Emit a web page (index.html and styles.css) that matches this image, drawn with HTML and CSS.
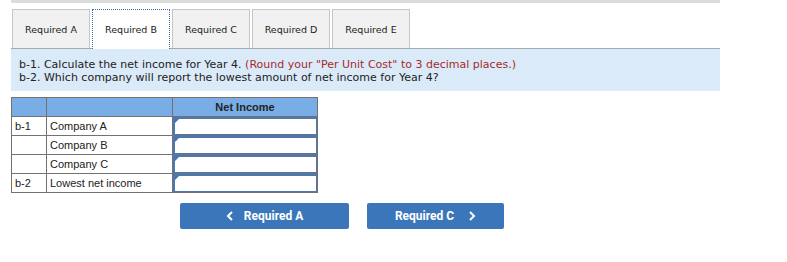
FILE: index.html
```html
<!DOCTYPE html>
<html>
<head>
<meta charset="utf-8">
<link rel="stylesheet" href="styles.css">
</head>
<body>
<div class="wrap">
  <div class="topbar"></div>
  <div class="tabs">
    <div class="tab">Required A</div>
    <div class="tab active">Required B</div>
    <div class="tab">Required C</div>
    <div class="tab">Required D</div>
    <div class="tab">Required E</div>
  </div>
  <div class="question">
    <div>b-1. Calculate the net income for Year 4. <span class="hint">(Round your "Per Unit Cost" to 3 decimal places.)</span></div>
    <div>b-2. Which company will report the lowest amount of net income for Year 4?</div>
  </div>
  <table class="grid">
    <colgroup><col class="c1"><col class="c2"><col class="c3"></colgroup>
    <thead>
      <tr><th></th><th></th><th>Net Income</th></tr>
    </thead>
    <tbody>
      <tr><td>b-1</td><td>Company A</td><td class="inp"><div class="box"><span class="tri"></span></div></td></tr>
      <tr><td></td><td>Company B</td><td class="inp"><div class="box"><span class="tri"></span></div></td></tr>
      <tr><td></td><td>Company C</td><td class="inp"><div class="box"><span class="tri"></span></div></td></tr>
      <tr><td>b-2</td><td>Lowest net income</td><td class="inp"><div class="box"><span class="tri"></span></div></td></tr>
    </tbody>
  </table>
  <div class="nav">
    <div class="btn prev">
      <svg width="8" height="10" viewBox="0 0 8 10"><path d="M6 1 L2 5 L6 9" fill="none" stroke="#fff" stroke-width="2"/></svg>
      <span>Required A</span>
    </div>
    <div class="btn next">
      <span>Required C</span>
      <svg width="8" height="10" viewBox="0 0 8 10"><path d="M2 1 L6 5 L2 9" fill="none" stroke="#fff" stroke-width="2"/></svg>
    </div>
  </div>
</div>
</body>
</html>
```
FILE: styles.css
```css
html, body { margin: 0; padding: 0; background: #fff; }
.wrap { margin-left: 11px; width: 709px; }
.topbar { height: 3px; background: #dcdcdc; }
.tabs {
  display: flex; align-items: flex-start; gap: 2px; margin-top: 6px; padding-left: 1px;
  border-bottom: 1px solid #a3abb3; height: 39px;
}
.tab {
  width: 76px; height: 38px; border: 1px solid #c6c6c6; border-bottom: none;
  background: #f1f1f1; display: flex; align-items: center; justify-content: center;
  font-family: "DejaVu Sans", Verdana, sans-serif; font-size: 9.5px; color: #222;
}
.tab.active { background: #fff; border: 1px dotted #3a6fb0; border-bottom: none; height: 38px; padding-bottom: 1px; margin-bottom: -1px; }
.question {
  background: #dbeaf8; height: 42px; box-sizing: border-box; padding: 9px 0 0 8px;
  font-family: "DejaVu Sans", Verdana, sans-serif; font-size: 11px; line-height: 13px; color: #222;
}
.hint { color: #a52a2a; }
.grid {
  margin-top: 6px; border-collapse: collapse; width: 307px; table-layout: fixed;
  font-family: "Liberation Sans", Arial, sans-serif; font-size: 11px; color: #222;
}
.c1 { width: 35px; }
.c2 { width: 126px; }
.grid tr { height: 19px; }
.grid th, .grid td { border: 1px solid #727272; padding: 0 0 0 3px; }
.grid th { background: #78aee5; font-weight: bold; text-align: center; color: #222; padding: 0; }
.grid td.inp { padding: 0; }
.box { position: relative; height: 18px; border: 2px solid #4a78b3; border-width: 2px 1px 1px 2px; box-sizing: border-box; background: #fff; }
.tri { position: absolute; left: 0; top: 0; width: 0; height: 0; border-top: 4px solid #3d74c0; border-right: 4px solid transparent; }
.nav { display: flex; gap: 18px; margin-top: 10px; padding-left: 169px; }
.btn {
  height: 26px; background: #3a76b9; border-radius: 2px; color: #fff;
  display: flex; align-items: center; justify-content: center; gap: 10px;
  font-family: Roboto, "Liberation Sans", sans-serif; font-weight: bold; font-size: 12px;
}
.prev { width: 169px; }
.next { width: 137px; gap: 14px; }
```
